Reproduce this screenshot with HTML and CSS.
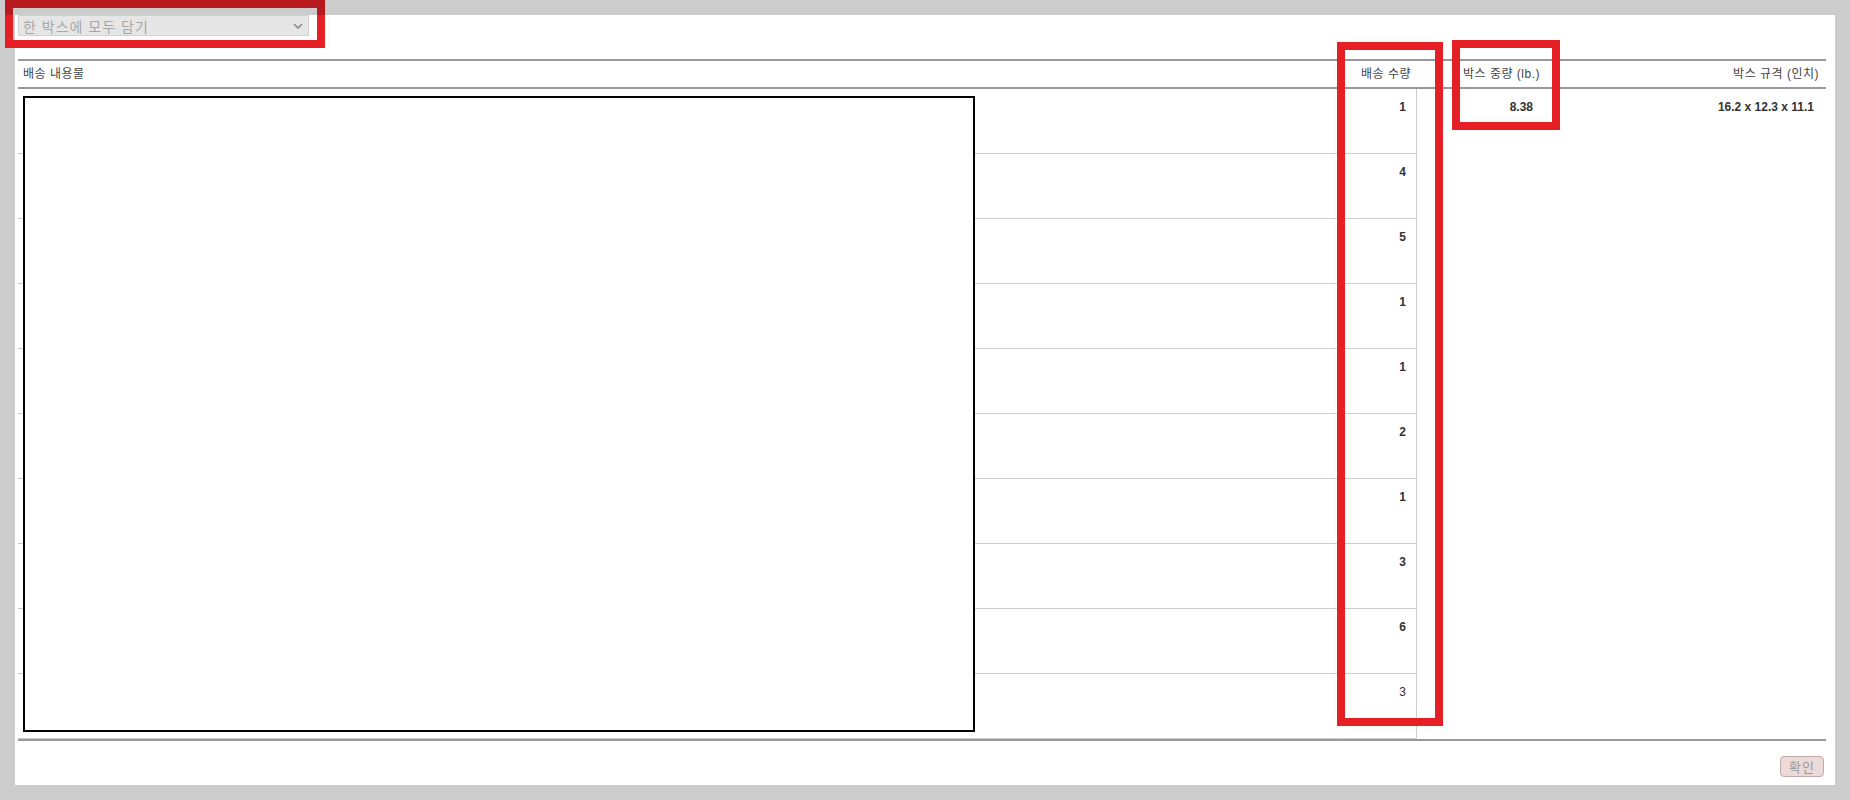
FILE: index.html
```html
<!DOCTYPE html>
<html lang="ko">
<head>
    <meta charset="UTF-8">
    <meta name="viewport" content="width=device-width, initial-scale=1.0">
    <title>박스 포장</title>
    <link rel="stylesheet" href="styles.css">
</head>
<body>
    <div class="dialog">
        <!-- Packing option -->
        <div class="select-wrap">
            <select class="box-select" disabled>
                <option>한 박스에 모두 담기</option>
            </select>
            <svg class="chevron" width="10" height="6" viewBox="0 0 10 6">
                <path d="M1 1l4 4 4-4" fill="none" stroke="#8a8a8a" stroke-width="1.6"/>
            </svg>
        </div>

        <!-- Shipment table -->
        <div class="ship-table">
            <div class="ship-head">
                <div class="th th-content">배송 내용물</div>
                <div class="th th-qty">배송 수량</div>
                <div class="th th-weight">박스 중량 (lb.)</div>
                <div class="th th-dims">박스 규격 (인치)</div>
            </div>
            <div class="ship-body">
                <div class="items">
                    <div class="item"><div class="item-content"></div><div class="item-qty">1</div></div>
                    <div class="item"><div class="item-content"></div><div class="item-qty">4</div></div>
                    <div class="item"><div class="item-content"></div><div class="item-qty">5</div></div>
                    <div class="item"><div class="item-content"></div><div class="item-qty">1</div></div>
                    <div class="item"><div class="item-content"></div><div class="item-qty">1</div></div>
                    <div class="item"><div class="item-content"></div><div class="item-qty">2</div></div>
                    <div class="item"><div class="item-content"></div><div class="item-qty">1</div></div>
                    <div class="item"><div class="item-content"></div><div class="item-qty">3</div></div>
                    <div class="item"><div class="item-content"></div><div class="item-qty">6</div></div>
                    <div class="item"><div class="item-content"></div><div class="item-qty last">3</div></div>
                    <!-- blanked product area -->
                    <div class="item-cover"></div>
                </div>
                <div class="td td-weight">8.38</div>
                <div class="td td-dims">16.2 x 12.3 x 11.1</div>
            </div>
        </div>

        <div class="actions">
            <button class="btn-ok" disabled>확인</button>
        </div>
    </div>

    <!-- Highlight marks -->
    <div class="mark mark-select"></div>
    <div class="mark mark-qty"></div>
    <div class="mark mark-weight"></div>
</body>
</html>
```

FILE: styles.css
```css
/* Page behind the dialog */
body {
    margin: 0;
    height: 800px;
    background-color: #cccccc;
    font-family: "Liberation Sans", "Noto Sans CJK KR", sans-serif;
    font-size: 12px;
    color: #333;
    position: relative;
}

/* Dialog panel */
.dialog {
    margin: 15px;
    height: 770px;
    padding: 0 9px 0 3px;
    background-color: #ffffff;
    box-sizing: border-box;
}

/* Packing select */
.select-wrap {
    position: relative;
    width: 291px;
    height: 21px;
}

.box-select {
    appearance: none;
    -webkit-appearance: none;
    width: 100%;
    height: 100%;
    margin: 0;
    padding: 0 0 0 4px;
    border: 1px solid #d2d2d2;
    background-color: #e6e6e6;
    color: #a6a6a6;
    font-family: "Noto Sans CJK KR", "Liberation Sans", sans-serif;
    font-size: 14px;
    letter-spacing: 1px;
    box-sizing: border-box;
    opacity: 1;
}

.chevron {
    position: absolute;
    right: 6px;
    top: 8px;
}

/* Shipment table */
.ship-table {
    margin-top: 23px;
    border-top: 2px solid #999;
    border-bottom: 2px solid #999;
}

.ship-head,
.ship-body {
    display: grid;
    grid-template-columns: 1318px 81px 128px 1fr;
}

.ship-head {
    border-bottom: 2px solid #999;
}

.th {
    height: 26px;
    line-height: 26px;
    color: #444;
    letter-spacing: 0.5px;
}

.th-content {
    padding-left: 5px;
}

.th-qty {
    text-align: right;
    padding-right: 6px;
}

.th-weight {
    padding-left: 46px;
}

.th-dims {
    text-align: right;
    padding-right: 7px;
}

.items {
    grid-column: 1 / 3;
    position: relative;
    border-right: 1px solid #cccccc;
}

.item {
    display: flex;
    height: 64px;
    border-bottom: 1px solid #cccccc;
}

.item:last-of-type {
    border-bottom: none;
}

.item-content {
    flex: 1;
}

.item-qty {
    width: 80px;
    padding: 10px 10px 0 0;
    line-height: 16px;
    text-align: right;
    font-weight: bold;
    box-sizing: border-box;
}

.item-qty.last {
    font-weight: normal;
}

/* White box over the product list */
.item-cover {
    position: absolute;
    left: 5px;
    top: 7px;
    width: 952px;
    height: 636px;
    border: 2px solid #000;
    background-color: #ffffff;
    box-sizing: border-box;
}

.td {
    padding-top: 10px;
    line-height: 16px;
    font-weight: bold;
    text-align: right;
}

.td-weight {
    padding-right: 12px;
}

.td-dims {
    padding-right: 12px;
}

/* Footer button */
.actions {
    display: flex;
    justify-content: flex-end;
    margin-top: 15px;
    padding-right: 2px;
}

.btn-ok {
    width: 44px;
    height: 21px;
    padding: 0;
    border: 1px solid #c4a9a9;
    border-radius: 4px;
    background-color: #ecd9d9;
    color: #9a9a9a;
    font-family: "Noto Sans CJK KR", sans-serif;
    font-size: 13px;
    line-height: 19px;
    letter-spacing: 1px;
}

/* Red highlight marks */
.mark {
    position: absolute;
    border: 8px solid #e41f26;
    box-sizing: border-box;
}

.mark-select {
    left: 5px;
    top: 0;
    width: 320px;
    height: 48px;
    border-image: linear-gradient(#b7191f 15px, #e41f26 15px) 8;
}

.mark-qty {
    left: 1337px;
    top: 42px;
    width: 106px;
    height: 684px;
}

.mark-weight {
    left: 1452px;
    top: 40px;
    width: 108px;
    height: 90px;
}
```
